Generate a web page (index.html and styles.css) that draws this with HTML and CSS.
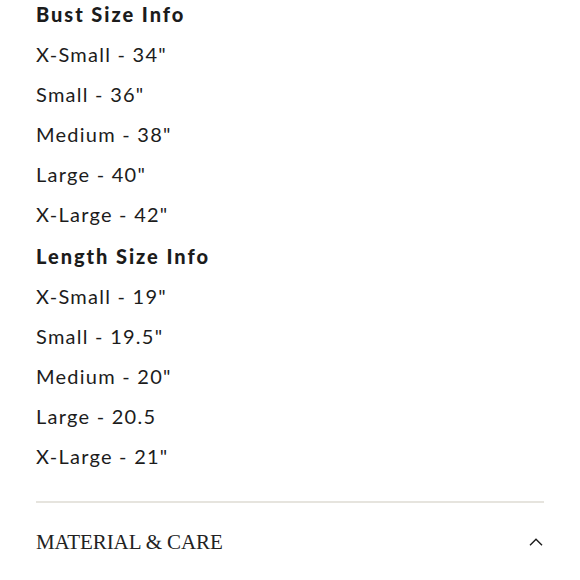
FILE: index.html
```html
<!DOCTYPE html>
<html>
<head>
<meta charset="utf-8">
<link rel="stylesheet" href="styles.css">
</head>
<body>
<div class="page">
  <section class="sizes">
    <h3 class="sizes__title">Bust Size Info</h3>
    <ul class="sizes__list">
      <li>X-Small - 34"</li>
      <li>Small - 36"</li>
      <li>Medium - 38"</li>
      <li>Large - 40"</li>
      <li>X-Large - 42"</li>
    </ul>
    <h3 class="sizes__title sizes__title--next">Length Size Info</h3>
    <ul class="sizes__list">
      <li>X-Small - 19"</li>
      <li>Small - 19.5"</li>
      <li>Medium - 20"</li>
      <li>Large - 20.5</li>
      <li>X-Large - 21"</li>
    </ul>
  </section>
  <hr class="divider">
  <div class="accordion">
    <span class="accordion__label">MATERIAL &amp; CARE</span>
    <svg class="accordion__icon" width="14" height="8" viewBox="0 0 14 8"><path d="M1 7.2 L7 1.2 L13 7.2" fill="none" stroke="#1a1a1a" stroke-width="1.4"/></svg>
  </div>
  <p class="accordion__body">Made of 100% Cotton</p>
</div>
</body>
</html>
```
FILE: styles.css
```css
html, body {
  margin: 0;
  padding: 0;
  background: #fff;
}
.page {
  padding: 0 36px;
  font-family: Lato, "Noto Sans", sans-serif;
  color: #1c1c1c;
}
.sizes__title {
  margin: 0 0 6px;
  font-size: 20px;
  font-weight: 900;
  line-height: 28px;
  letter-spacing: 1.95px;
}
.sizes__title--next {
  margin-top: 8px;
}
.sizes__list {
  list-style: none;
  margin: 0;
  padding: 0;
}
.sizes__list li {
  font-size: 20px;
  line-height: 40px;
  letter-spacing: 1.25px;
}
.divider {
  margin: 25px 0 0;
  border: 0;
  height: 2px;
  background: #e6e4de;
}
.accordion {
  display: flex;
  justify-content: space-between;
  align-items: center;
  padding: 28px 0;
  line-height: 22px;
}
.accordion__label {
  font-family: "Liberation Serif", serif;
  font-size: 21px;
  letter-spacing: -0.1px;
  color: #222;
}
.accordion__icon {
  margin-right: 1px;
}
.accordion__body {
  margin: -5px 0 0;
  font-size: 18px;
  line-height: 22px;
}
```
